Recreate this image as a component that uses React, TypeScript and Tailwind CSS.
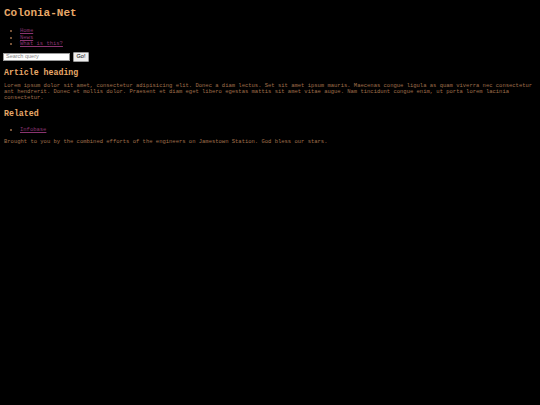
export default function App() {
  return (
    <div className="min-h-screen bg-black px-[4px] pt-[7px] font-['Courier','Nimbus_Mono_PS','FreeMono','Liberation_Mono',monospace] text-[5.5px] text-[#a0704c]">
      <h1 className="text-[11px] font-bold leading-[13px] text-[#e8a868]">Colonia-Net</h1>

      <ul className="mt-[8px] list-disc pl-[16px] leading-[6.5px]">
        <li>
          <a href="#" className="text-[#8a3470] underline">Home</a>
        </li>
        <li>
          <a href="#" className="text-[#8a3470] underline">News</a>
        </li>
        <li>
          <a href="#" className="text-[#8a3470] underline">What is this?</a>
        </li>
      </ul>

      <form className="mt-[4px] flex items-center gap-[3px]" onSubmit={(e) => e.preventDefault()}>
        <input
          type="text"
          placeholder="Search query"
          className="h-[8px] w-[67px] -ml-[1px] border border-[#999] bg-white px-[2px] font-['Liberation_Sans',sans-serif] text-[5.5px] text-black placeholder:text-[#888] outline-none"
        />
        <button
          type="submit"
          className="h-[10px] w-[16px] rounded-[1px] border border-[#999] bg-[#efefef] font-['Liberation_Sans',sans-serif] text-[5.5px] leading-none text-black"
        >
          Go!
        </button>
      </form>

      <h2 className="mt-[6px] text-[8.25px] font-bold leading-[10px] text-[#e8a868]">Article heading</h2>

      <p className="mt-[5px] leading-[6.4px]">
        Lorem ipsum dolor sit amet, consectetur adipisicing elit. Donec a diam lectus. Set sit amet ipsum mauris. Maecenas congue ligula as quam viverra nec consectetur ant hendrerit. Donec et mollis dolor. Praesent et diam eget libero egestas mattis sit amet vitae augue. Nam tincidunt congue enim, ut porta lorem lacinia consectetur.
      </p>

      <h2 className="mt-[7px] text-[8.25px] font-bold leading-[10px] text-[#e8a868]">Related</h2>

      <ul className="mt-[8px] list-disc pl-[16px] leading-[6.5px]">
        <li>
          <a href="#" className="text-[#8a3470] underline">Infobase</a>
        </li>
      </ul>

      <p className="mt-[5.5px] leading-[6.5px]">
        Brought to you by the combined efforts of the engineers on Jamestown Station. God bless our stars.
      </p>
    </div>
  );
}
